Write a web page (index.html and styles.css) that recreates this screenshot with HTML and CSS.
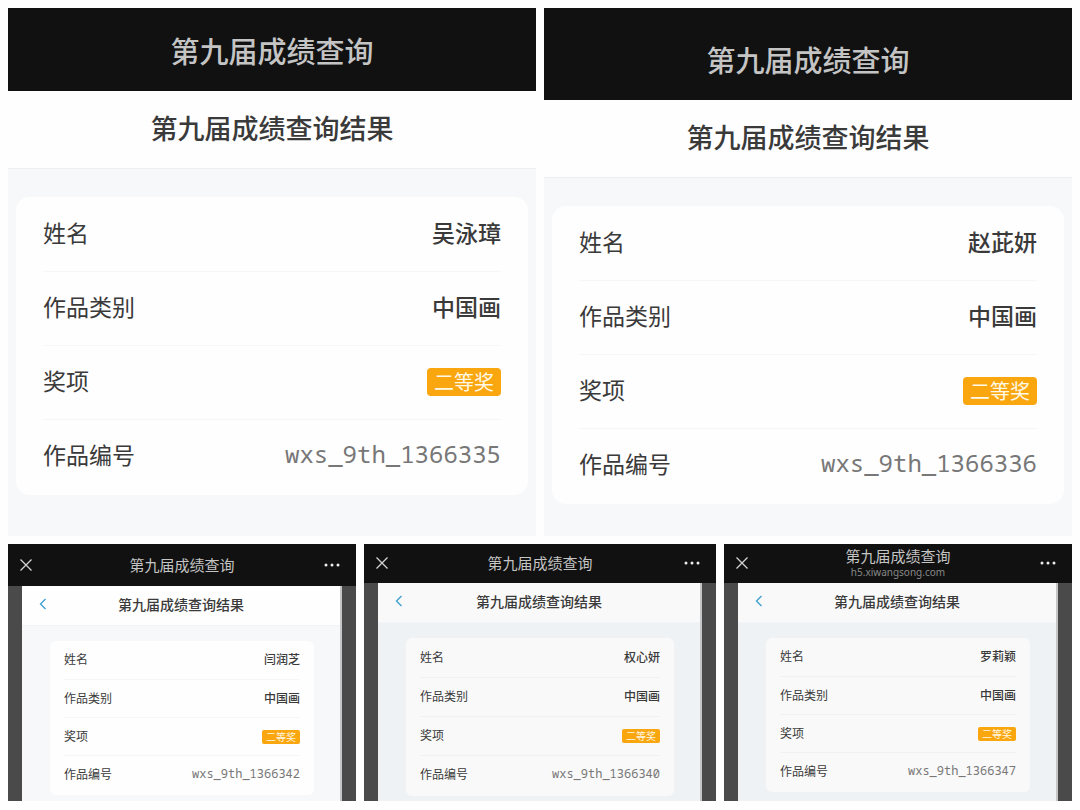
FILE: index.html
```html
<!DOCTYPE html>
<html lang="zh-CN">
<head>
    <meta charset="UTF-8">
    <meta name="viewport" content="width=device-width, initial-scale=1.0">
    <title>第九届成绩查询</title>
    <link rel="stylesheet" href="styles.css">
</head>
<body>
    <main class="gallery">
        <div class="large-row">
            <section class="screen">
                <header class="topbar">
                    <h1>第九届成绩查询</h1>
                </header>
                <div class="page">
                    <div class="subbar">
                        <h2>第九届成绩查询结果</h2>
                    </div>
                    <dl class="card">
                        <div class="row"><dt>姓名</dt><dd>吴泳璋</dd></div>
                        <div class="row"><dt>作品类别</dt><dd>中国画</dd></div>
                        <div class="row"><dt>奖项</dt><dd><span class="badge">二等奖</span></dd></div>
                        <div class="row"><dt>作品编号</dt><dd class="code">wxs_9th_1366335</dd></div>
                    </dl>
                </div>
            </section>
            <section class="screen">
                <header class="topbar topbar-high">
                    <h1>第九届成绩查询</h1>
                </header>
                <div class="page">
                    <div class="subbar">
                        <h2>第九届成绩查询结果</h2>
                    </div>
                    <dl class="card">
                        <div class="row"><dt>姓名</dt><dd>赵茈妍</dd></div>
                        <div class="row"><dt>作品类别</dt><dd>中国画</dd></div>
                        <div class="row"><dt>奖项</dt><dd><span class="badge">二等奖</span></dd></div>
                        <div class="row"><dt>作品编号</dt><dd class="code">wxs_9th_1366336</dd></div>
                    </dl>
                </div>
            </section>
        </div>

        <div class="small-row">
            <section class="screen small">
                <header class="topbar topbar-high">
                    <button class="icon-button" type="button" aria-label="关闭">
                        <svg width="14" height="14" viewBox="0 0 14 14"><path d="M1.5 1.5l11 11M12.5 1.5l-11 11"/></svg>
                    </button>
                    <h1>第九届成绩查询</h1>
                    <button class="icon-button more" type="button" aria-label="更多">
                        <svg width="18" height="6" viewBox="0 0 18 6"><circle cx="3" cy="3" r="1.5"/><circle cx="9" cy="3" r="1.5"/><circle cx="15" cy="3" r="1.5"/></svg>
                    </button>
                </header>
                <div class="frame">
                    <div class="page">
                        <div class="subbar">
                            <button class="icon-button back" type="button" aria-label="返回">
                                <svg width="8" height="12" viewBox="0 0 8 12"><path d="M6.5 1L1.5 6l5 5"/></svg>
                            </button>
                            <h2>第九届成绩查询结果</h2>
                        </div>
                        <dl class="card">
                            <div class="row"><dt>姓名</dt><dd>闫润芝</dd></div>
                            <div class="row"><dt>作品类别</dt><dd>中国画</dd></div>
                            <div class="row"><dt>奖项</dt><dd><span class="badge">二等奖</span></dd></div>
                            <div class="row"><dt>作品编号</dt><dd class="code">wxs_9th_1366342</dd></div>
                        </dl>
                    </div>
                </div>
            </section>
            <section class="screen small dim roomy">
                <header class="topbar">
                    <button class="icon-button" type="button" aria-label="关闭">
                        <svg width="14" height="14" viewBox="0 0 14 14"><path d="M1.5 1.5l11 11M12.5 1.5l-11 11"/></svg>
                    </button>
                    <h1>第九届成绩查询</h1>
                    <button class="icon-button more" type="button" aria-label="更多">
                        <svg width="18" height="6" viewBox="0 0 18 6"><circle cx="3" cy="3" r="1.5"/><circle cx="9" cy="3" r="1.5"/><circle cx="15" cy="3" r="1.5"/></svg>
                    </button>
                </header>
                <div class="frame">
                    <div class="page">
                        <div class="subbar">
                            <button class="icon-button back" type="button" aria-label="返回">
                                <svg width="8" height="12" viewBox="0 0 8 12"><path d="M6.5 1L1.5 6l5 5"/></svg>
                            </button>
                            <h2>第九届成绩查询结果</h2>
                        </div>
                        <dl class="card">
                            <div class="row"><dt>姓名</dt><dd>权心妍</dd></div>
                            <div class="row"><dt>作品类别</dt><dd>中国画</dd></div>
                            <div class="row"><dt>奖项</dt><dd><span class="badge">二等奖</span></dd></div>
                            <div class="row"><dt>作品编号</dt><dd class="code">wxs_9th_1366340</dd></div>
                        </dl>
                    </div>
                </div>
            </section>
            <section class="screen small dim">
                <header class="topbar">
                    <button class="icon-button" type="button" aria-label="关闭">
                        <svg width="14" height="14" viewBox="0 0 14 14"><path d="M1.5 1.5l11 11M12.5 1.5l-11 11"/></svg>
                    </button>
                    <div class="title-group">
                        <h1>第九届成绩查询</h1>
                        <p class="host">h5.xiwangsong.com</p>
                    </div>
                    <button class="icon-button more" type="button" aria-label="更多">
                        <svg width="18" height="6" viewBox="0 0 18 6"><circle cx="3" cy="3" r="1.5"/><circle cx="9" cy="3" r="1.5"/><circle cx="15" cy="3" r="1.5"/></svg>
                    </button>
                </header>
                <div class="frame">
                    <div class="page">
                        <div class="subbar">
                            <button class="icon-button back" type="button" aria-label="返回">
                                <svg width="8" height="12" viewBox="0 0 8 12"><path d="M6.5 1L1.5 6l5 5"/></svg>
                            </button>
                            <h2>第九届成绩查询结果</h2>
                        </div>
                        <dl class="card">
                            <div class="row"><dt>姓名</dt><dd>罗莉颖</dd></div>
                            <div class="row"><dt>作品类别</dt><dd>中国画</dd></div>
                            <div class="row"><dt>奖项</dt><dd><span class="badge">二等奖</span></dd></div>
                            <div class="row"><dt>作品编号</dt><dd class="code">wxs_9th_1366347</dd></div>
                        </dl>
                    </div>
                </div>
            </section>
        </div>
    </main>
</body>
</html>
```
FILE: styles.css
```css
* {
    box-sizing: border-box;
}
body {
    margin: 0;
    background: #fefefe;
    color: #3a3a3a;
    font-family: "Noto Sans CJK SC", "Noto Sans", sans-serif;
}
h1, h2, dl, dd, p {
    margin: 0;
}
.gallery {
    display: flex;
    flex-direction: column;
    gap: 8px;
    padding: 8px;
}
.large-row {
    display: grid;
    grid-template-columns: 1fr 1fr;
    gap: 8px;
}
.small-row {
    display: grid;
    grid-template-columns: 348fr 352fr 348fr;
    gap: 8px;
}
.screen {
    display: flex;
    flex-direction: column;
}
.topbar {
    display: flex;
    align-items: center;
    justify-content: center;
    min-height: 83px;
    background: #111;
    color: #c4c4c4;
}
.topbar-high {
    min-height: 92px;
    padding-top: 10px;
}
.topbar h1 {
    font-size: 29px;
    font-weight: 500;
    line-height: 36px;
}
.page {
    flex: 1;
    padding-bottom: 32px;
    background: #f6f8fa;
}
.subbar {
    display: flex;
    align-items: center;
    justify-content: center;
    height: 78px;
    padding-bottom: 4px;
    background: #fefefe;
    border-bottom: 1px solid #eceef0;
}
.subbar h2 {
    font-size: 27px;
    font-weight: 500;
    line-height: 36px;
}
.card {
    margin: 28px 8px 0;
    padding: 0 27px 2px;
    background: #fefefe;
    border-radius: 14px;
}
.row {
    display: flex;
    align-items: center;
    justify-content: space-between;
    min-height: 74px;
    padding-bottom: 5px;
    font-size: 23px;
    line-height: 32px;
}
.row + .row {
    border-top: 1px solid #f6f6f6;
}
.row dd {
    font-weight: 500;
}
.row .code {
    color: #777;
    font-family: "Noto Sans Mono", "DejaVu Sans Mono", monospace;
    font-size: 24px;
    font-weight: 400;
}
.badge {
    display: block;
    margin-top: 4px;
    padding: 0 7px;
    background: #f9a60f;
    border-radius: 4px;
    color: #fff8e4;
    font-size: 20px;
    font-weight: 400;
    line-height: 28px;
}

/* phone captures with the browser bar */
.small .topbar {
    justify-content: space-between;
    min-height: 39px;
    padding: 0 11px 2px;
}
.small .topbar-high {
    min-height: 42px;
    padding-bottom: 0;
}
.small .topbar h1 {
    font-size: 15px;
    font-weight: 400;
    line-height: 18px;
}
.title-group {
    text-align: center;
}
.host {
    color: #888;
    font-family: "Noto Sans", sans-serif;
    font-size: 10px;
    line-height: 14px;
}
.icon-button {
    display: flex;
    width: 30px;
    padding: 0;
    background: none;
    border: 0;
    color: #d4d4d4;
}
.icon-button path {
    fill: none;
    stroke: currentColor;
    stroke-width: 1.3;
}
.more {
    justify-content: flex-end;
    padding-right: 4px;
    color: #eee;
}
.more circle {
    fill: currentColor;
}
.frame {
    display: flex;
    flex: 1;
    padding: 0 14px;
    background: #4a4a4a;
}
.small .page {
    padding-bottom: 5px;
    border-right: 2px solid #c4c6c8;
}
.small .subbar {
    position: relative;
    height: 40px;
    padding-bottom: 3px;
    border-color: #f2f4f5;
}
.small .subbar h2 {
    font-size: 14px;
    line-height: 20px;
}
.back {
    position: absolute;
    left: 17px;
    color: #3a9fd0;
}
.small .card {
    margin: 15px 26px 0 28px;
    padding: 0 14px 2px;
    border-radius: 6px;
}
.small .row {
    min-height: 38px;
    padding-bottom: 2px;
    font-size: 12px;
    line-height: 18px;
}
.small .code {
    font-size: 12px;
}
.small .badge {
    margin-top: 2px;
    padding: 0 4px;
    border-radius: 2px;
    font-size: 10px;
    line-height: 14px;
}
.roomy .row {
    min-height: 39px;
}
.dim .page {
    background: #eff2f4;
}
.dim .subbar,
.dim .card {
    background: #f9f9f9;
}
.dim .row + .row {
    border-color: #f1f1f1;
}
```
